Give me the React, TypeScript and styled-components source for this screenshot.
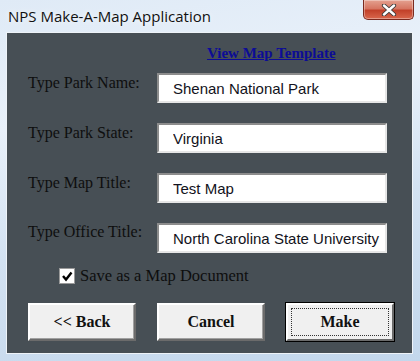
import styled, { createGlobalStyle } from "styled-components";

const GlobalStyle = createGlobalStyle`
  html, body {
    margin: 0;
    padding: 0;
    background: #ffffff;
  }
`;

// Aero window frame
const Window = styled.div`
  width: 420px;
  height: 361px;
  box-sizing: border-box;
  display: flex;
  flex-direction: column;
  padding: 0 7px 7px 6px;
  background: linear-gradient(
    170deg,
    #dfeaf6 0%,
    #e9f1fa 30%,
    #d3e2f2 60%,
    #c3d7ec 100%
  );
`;

const TitleBar = styled.div`
  height: 32px;
  display: flex;
  justify-content: space-between;
  align-items: flex-start;
`;

const Title = styled.div`
  padding: 6px 0 0 2px;
  font-family: "Open Sans", "Noto Sans", sans-serif;
  font-size: 15px;
  color: #111;
  text-shadow: 0 0 6px rgba(255, 255, 255, 0.9);
`;

const CloseButton = styled.div`
  width: 51px;
  height: 20px;
  box-sizing: border-box;
  margin-right: -1px;
  display: flex;
  align-items: center;
  justify-content: center;
  border: 1px solid #7a2a1f;
  border-top: none;
  border-radius: 0 0 5px 5px;
  background: linear-gradient(#e4a190 0%, #d67662 45%, #c2412a 55%, #d9674c 100%);
  box-shadow: inset 0 0 0 1px rgba(255, 255, 255, 0.35);
`;

// Dark client area
const Client = styled.div`
  flex: 1;
  background: #474f55;
  border: 1px solid #eef3f8;
  padding: 12px 0 0 21px;
  display: flex;
  flex-direction: column;
`;

const TemplateLink = styled.a`
  margin-left: 179px;
  font-family: "Liberation Serif", serif;
  font-weight: bold;
  font-size: 15px;
  line-height: 16px;
  color: #0c0c96;
  text-decoration: underline;
  cursor: pointer;
`;

const Form = styled.div`
  margin-top: 12px;
  display: flex;
  flex-direction: column;
  gap: 20px;
`;

const Row = styled.div`
  display: flex;
  align-items: flex-start;
  height: 30px;
`;

const Label = styled.label<{ $indent: number }>`
  width: 129px;
  padding: 1px 0 0 ${(p) => p.$indent}px;
  box-sizing: border-box;
  font-family: "Liberation Serif", serif;
  font-size: 16px;
  line-height: 18px;
  color: #0e0e0e;
  white-space: nowrap;
`;

const TextBox = styled.input`
  width: 230px;
  height: 30px;
  box-sizing: border-box;
  padding: 0 0 0 14px;
  border: 2px solid;
  border-color: #8c8c8c #e6e6e6 #e6e6e6 #8c8c8c;
  background: #ffffff;
  font-family: "Liberation Sans", Arial, sans-serif;
  font-size: 15px;
  color: #121220;
  outline: none;
`;

const CheckRow = styled.label`
  margin: 14px 0 0 31px;
  display: flex;
  align-items: center;
  gap: 5px;
  font-family: "Liberation Serif", serif;
  font-size: 16.5px;
  line-height: 18px;
  color: #0e0e0e;
`;

const CheckBox = styled.span`
  width: 16px;
  height: 16px;
  box-sizing: border-box;
  border: 1px solid #9a9a9a;
  background: #ffffff;
  display: flex;
  align-items: center;
  justify-content: center;
`;

const Buttons = styled.div`
  margin-top: 18px;
  display: flex;
  gap: 21px;
`;

const Button = styled.button<{ $default?: boolean }>`
  width: 108px;
  height: 38px;
  box-sizing: border-box;
  position: relative;
  padding: 0;
  background: #f0f0f0;
  border: 2px solid;
  border-color: #ffffff #6b6b6b #6b6b6b #ffffff;
  outline: ${(p) => (p.$default ? "1px solid #000" : "none")};
  box-shadow: ${(p) =>
    p.$default ? "0 0 0 1px #000" : "inset -1px -1px 0 #a0a0a0"};
  font-family: "Liberation Serif", serif;
  font-weight: bold;
  font-size: 16px;
  color: #111;
  cursor: pointer;
`;

// dotted focus rectangle on the default button
const FocusRing = styled.span`
  position: absolute;
  inset: 3px;
  border: 1px dotted #333;
  pointer-events: none;
`;

export default function App() {
  return (
    <>
      <GlobalStyle />
      <Window>
        <TitleBar>
          <Title>NPS Make-A-Map Application</Title>
          <CloseButton>
            <svg width="16" height="12" viewBox="0 0 16 12">
              <path
                d="M3 1.5 L13 10.5 M13 1.5 L3 10.5"
                stroke="#3a3a3a"
                strokeWidth="4.2"
                strokeLinecap="round"
              />
              <path
                d="M3 1.5 L13 10.5 M13 1.5 L3 10.5"
                stroke="#ffffff"
                strokeWidth="2.4"
                strokeLinecap="round"
              />
            </svg>
          </CloseButton>
        </TitleBar>
        <Client>
          <TemplateLink>View Map Template</TemplateLink>
          <Form>
            <Row>
              <Label $indent={0}>Type Park Name:</Label>
              <TextBox defaultValue="Shenan National Park" />
            </Row>
            <Row>
              <Label $indent={0}>Type Park State:</Label>
              <TextBox defaultValue="Virginia" />
            </Row>
            <Row>
              <Label $indent={0}>Type Map Title:</Label>
              <TextBox defaultValue="Test Map" />
            </Row>
            <Row>
              <Label $indent={-10}>Type Office Title:</Label>
              <TextBox defaultValue="North Carolina State University" />
            </Row>
          </Form>
          <CheckRow>
            <CheckBox>
              <svg width="12" height="12" viewBox="0 0 12 12">
                <path
                  d="M2 6 L5 9.5 L10.5 2.5"
                  fill="none"
                  stroke="#000"
                  strokeWidth="2.4"
                />
              </svg>
            </CheckBox>
            Save as a Map Document
          </CheckRow>
          <Buttons>
            <Button>&lt;&lt; Back</Button>
            <Button>Cancel</Button>
            <Button $default>
              Make
              <FocusRing />
            </Button>
          </Buttons>
        </Client>
      </Window>
    </>
  );
}
